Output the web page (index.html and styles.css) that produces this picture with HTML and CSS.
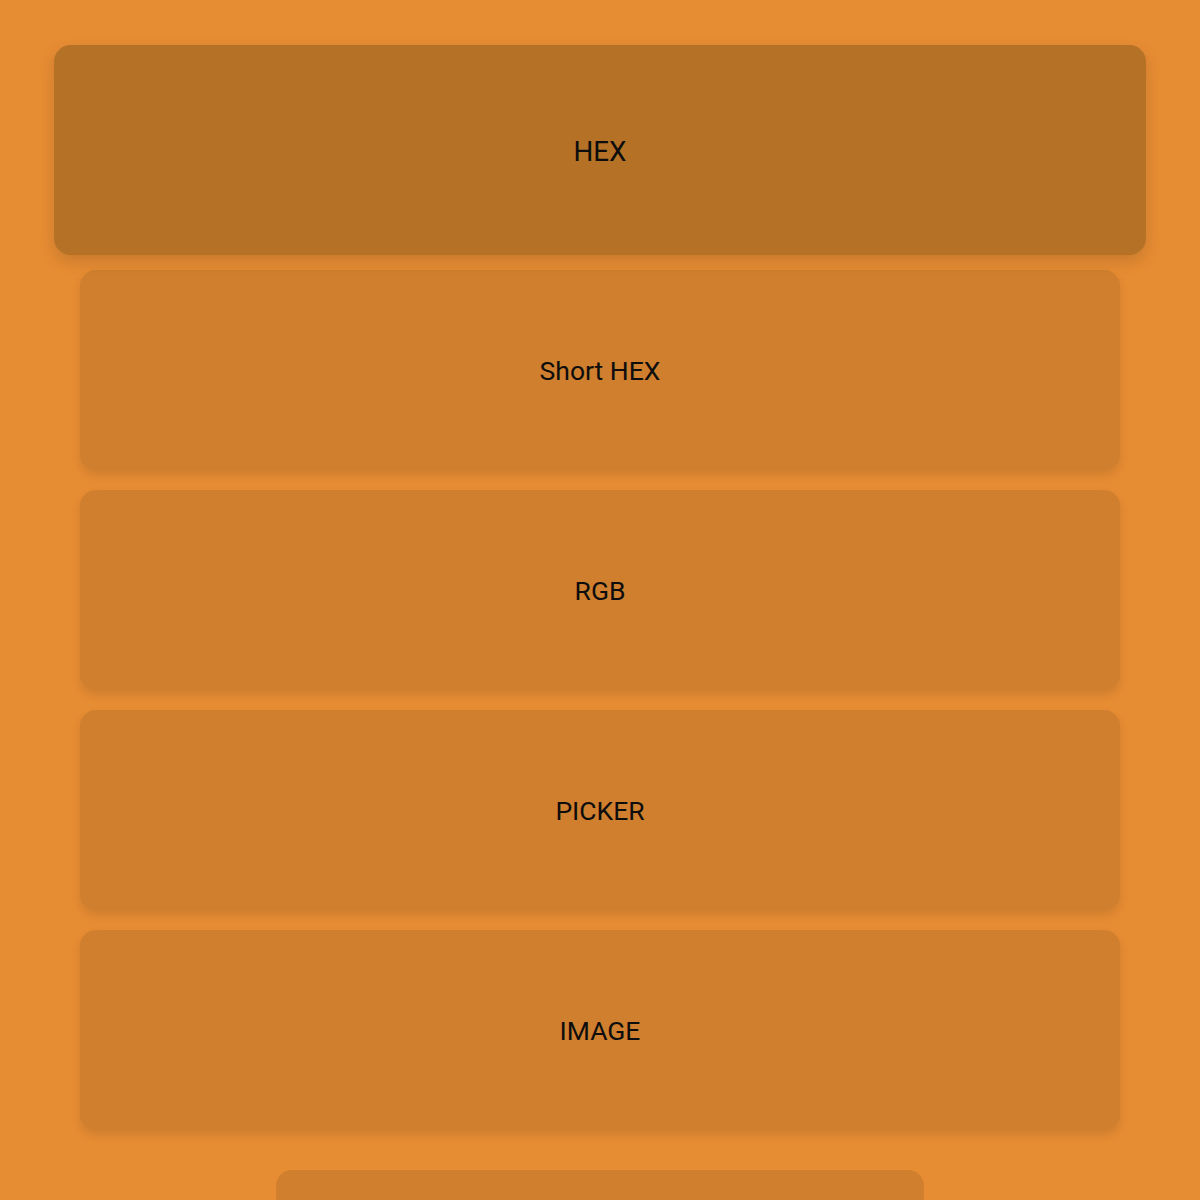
FILE: index.html
```html
<!DOCTYPE html>
<html>
<head>
<meta charset="utf-8">
<link rel="stylesheet" href="styles.css">
</head>
<body>
<main class="menu">
  <div class="card active">HEX</div>
  <div class="card">Short HEX</div>
  <div class="card">RGB</div>
  <div class="card">PICKER</div>
  <div class="card">IMAGE</div>
  <div class="extra"></div>
</main>
</body>
</html>
```

FILE: styles.css
```css
html, body {
  margin: 0;
  padding: 0;
  background: #e68c33;
  height: 100%;
  overflow: hidden;
}
body {
  font-family: Roboto, "Liberation Sans", sans-serif;
}
.menu {
  display: flex;
  flex-direction: column;
  align-items: center;
  gap: 20px;
  padding: 50px 80px 0;
}
.card {
  width: 100%;
  height: 200px;
  box-sizing: border-box;
  padding-top: 1px;
  display: flex;
  align-items: center;
  justify-content: center;
  background: #cf7f2d;
  border-radius: 16px;
  box-shadow: 0 5px 10px rgba(0, 0, 0, 0.1);
  font-size: 26.5px;
  color: #0d0d0d;
}
.card.active {
  background: #b57226;
  transform: scale(1.05);
  box-shadow: 0 6px 14px rgba(0, 0, 0, 0.12);
}
.extra {
  margin-top: 20px;
  width: 648px;
  height: 200px;
  flex-shrink: 0;
  background: #cf7f2d;
  border-radius: 16px;
}
```
